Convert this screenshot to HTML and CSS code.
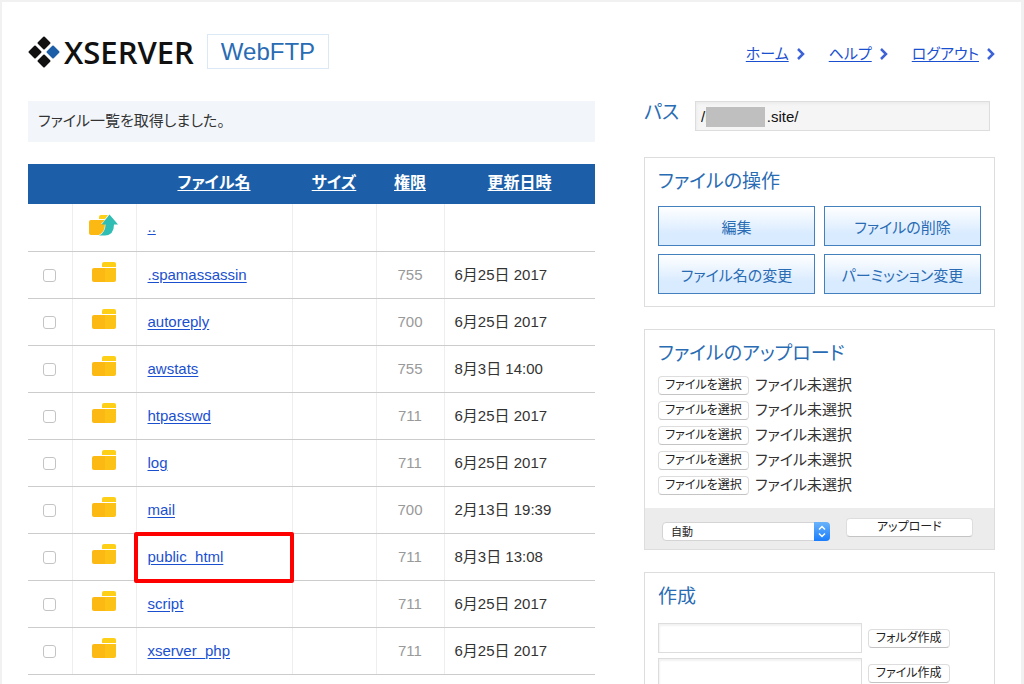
FILE: index.html
```html
<!DOCTYPE html>
<html lang="ja">
<head>
<meta charset="utf-8">
<meta name="viewport" content="width=device-width, initial-scale=1">
<title>XSERVER WebFTP</title>
<link rel="stylesheet" href="styles.css">
</head>
<body>
<svg class="defs" aria-hidden="true">
  <symbol id="folder" viewBox="0 0 24 20">
    <path fill="#fdd017" d="M10 5V2q0-2 2-2h10q2 0 2 2v3z"/>
    <path fill="#fdb913" d="M2 6h12v14H2q-2 0-2-2V8q0-2 2-2z"/>
    <path fill="#fdc216" d="M13 6h11v12q0 2-2 2h-9z"/>
  </symbol>
  <symbol id="folder-up" viewBox="0 0 30 22">
    <path fill="#fdd017" d="M10 5V3q0-2 2-2h7l-3 4z"/>
    <path fill="#fdb913" d="M2 6h14l-4 4h4q0 8-6 11H2q-2 0-2-2V8q0-2 2-2z"/>
    <path fill="#30bdb4" d="M20.500 0.500L29 10.500h-4q0 10.500-9 11h-6q6.500-3 6.500-11h-4z"/>
  </symbol>
  <symbol id="chevron" viewBox="0 0 8 12">
    <path fill="none" stroke="#3c62d6" stroke-width="2.500" d="M1 1l5 5-5 5"/>
  </symbol>
</svg>
<div class="sheet">
  <header class="header">
    <div class="brand">
      <svg class="mark" viewBox="0 0 32 32" aria-hidden="true">
        <g fill="#111" stroke="#111" stroke-width="2" stroke-linejoin="round">
          <path d="M16 1.500l5.500 5.500-5.500 5.500L10.500 7z"/>
          <path d="M7 10.500l5.500 5.500L7 21.500 1.500 16z"/>
          <path d="M16 19.500l5.500 5.500-5.500 5.500L10.500 25z"/>
          <path fill="#1c5fa8" stroke="#1c5fa8" d="M25 10.500l5.500 5.500-5.500 5.500-5.500-5.500z"/>
        </g>
      </svg>
      <span class="brand-name">XSERVER</span>
      <span class="product">WebFTP</span>
    </div>
    <nav class="nav">
      <span class="nav-item"><a href="#">ホーム</a><svg class="chevron"><use href="#chevron"/></svg></span>
      <span class="nav-item"><a href="#">ヘルプ</a><svg class="chevron"><use href="#chevron"/></svg></span>
      <span class="nav-item"><a href="#">ログアウト</a><svg class="chevron"><use href="#chevron"/></svg></span>
    </nav>
  </header>
  <div class="columns">
    <main class="main">
      <p class="message">ファイル一覧を取得しました。</p>
      <table class="files">
        <colgroup><col class="c-check"><col class="c-icon"><col class="c-name"><col class="c-size"><col class="c-mode"><col class="c-date"></colgroup>
        <thead><tr><th></th><th></th><th><a href="#">ファイル名</a></th><th><a href="#">サイズ</a></th><th><a href="#">権限</a></th><th><a href="#">更新日時</a></th></tr></thead>
        <tbody>
          <tr><td></td><td class="icon"><svg class="up"><use href="#folder-up"/></svg></td><td><a href="#">..</a></td><td></td><td></td><td></td></tr>
          <tr><td class="check"><input type="checkbox" aria-label=".spamassassin"></td><td class="icon"><svg class="folder"><use href="#folder"/></svg></td><td><a href="#">.spamassassin</a></td><td></td><td class="mode">755</td><td>6月25日 2017</td></tr>
          <tr><td class="check"><input type="checkbox" aria-label="autoreply"></td><td class="icon"><svg class="folder"><use href="#folder"/></svg></td><td><a href="#">autoreply</a></td><td></td><td class="mode">700</td><td>6月25日 2017</td></tr>
          <tr><td class="check"><input type="checkbox" aria-label="awstats"></td><td class="icon"><svg class="folder"><use href="#folder"/></svg></td><td><a href="#">awstats</a></td><td></td><td class="mode">755</td><td>8月3日 14:00</td></tr>
          <tr><td class="check"><input type="checkbox" aria-label="htpasswd"></td><td class="icon"><svg class="folder"><use href="#folder"/></svg></td><td><a href="#">htpasswd</a></td><td></td><td class="mode">711</td><td>6月25日 2017</td></tr>
          <tr><td class="check"><input type="checkbox" aria-label="log"></td><td class="icon"><svg class="folder"><use href="#folder"/></svg></td><td><a href="#">log</a></td><td></td><td class="mode">711</td><td>6月25日 2017</td></tr>
          <tr><td class="check"><input type="checkbox" aria-label="mail"></td><td class="icon"><svg class="folder"><use href="#folder"/></svg></td><td><a href="#">mail</a></td><td></td><td class="mode">700</td><td>2月13日 19:39</td></tr>
          <tr><td class="check"><input type="checkbox" aria-label="public_html"></td><td class="icon"><svg class="folder"><use href="#folder"/></svg></td><td class="marked"><a href="#">public_html</a></td><td></td><td class="mode">711</td><td>8月3日 13:08</td></tr>
          <tr><td class="check"><input type="checkbox" aria-label="script"></td><td class="icon"><svg class="folder"><use href="#folder"/></svg></td><td><a href="#">script</a></td><td></td><td class="mode">711</td><td>6月25日 2017</td></tr>
          <tr><td class="check"><input type="checkbox" aria-label="xserver_php"></td><td class="icon"><svg class="folder"><use href="#folder"/></svg></td><td><a href="#">xserver_php</a></td><td></td><td class="mode">711</td><td>6月25日 2017</td></tr>
        </tbody>
      </table>
    </main>
    <aside class="side">
      <div class="path">
        <label class="title" for="path">パス</label>
        <div class="path-field"><input id="path" class="text" type="text" value="/l              .site/" readonly><span class="redaction"></span></div>
      </div>
      <section class="panel">
        <h2 class="title">ファイルの操作</h2>
        <div class="actions">
          <button class="action" type="button">編集</button>
          <button class="action" type="button">ファイルの削除</button>
          <button class="action" type="button">ファイル名の変更</button>
          <button class="action" type="button">パーミッション変更</button>
        </div>
      </section>
      <section class="panel upload">
        <h2 class="title">ファイルのアップロード</h2>
        <div class="pickers">
          <div class="picker"><button class="button" type="button">ファイルを選択</button><span>ファイル未選択</span></div>
          <div class="picker"><button class="button" type="button">ファイルを選択</button><span>ファイル未選択</span></div>
          <div class="picker"><button class="button" type="button">ファイルを選択</button><span>ファイル未選択</span></div>
          <div class="picker"><button class="button" type="button">ファイルを選択</button><span>ファイル未選択</span></div>
          <div class="picker"><button class="button" type="button">ファイルを選択</button><span>ファイル未選択</span></div>
        </div>
        <div class="upload-bar">
          <div class="select-wrap">
            <select class="select" aria-label="文字コード"><option>自動</option></select>
            <svg class="stepper" viewBox="0 0 16 18" aria-hidden="true"><path fill="none" stroke="#fff" stroke-width="1.500" d="M5 7l3-3 3 3M5 11l3 3 3-3"/></svg>
          </div>
          <button class="button wide" type="button">アップロード</button>
        </div>
      </section>
      <section class="panel">
        <h2 class="title">作成</h2>
        <div class="create">
          <input class="text" type="text" aria-label="フォルダ名"><button class="button" type="button">フォルダ作成</button>
          <input class="text" type="text" aria-label="ファイル名"><button class="button" type="button">ファイル作成</button>
        </div>
      </section>
    </aside>
  </div>
</div>
</body>
</html>
```
FILE: styles.css
```css
* { box-sizing: border-box; }
body {
  margin: 0;
  padding: 2px 3px 0 2px;
  background: #f1f1f1;
  color: #333;
  font: 15px/20px "Liberation Sans", "Noto Sans CJK JP", sans-serif;
  font-feature-settings: "palt";
}
button, input, select { font: inherit; font-feature-settings: inherit; }
a { color: #1a50d0; text-underline-offset: 2px; }
.defs { position: absolute; width: 0; height: 0; }
.sheet { min-height: 100vh; padding: 32px 26px 12px; background: #fff; }

.header { display: flex; justify-content: space-between; height: 67px; }
.brand { display: flex; align-items: center; height: 35px; }
.mark { width: 32px; height: 32px; }
.brand-name { margin-left: 4px; color: #111; font: 600 31px/34px "Open Sans", sans-serif; }
.product {
  margin-left: 13px;
  padding: 0 13px;
  border: 1px solid #dbe8f5;
  color: #2a6cb4;
  font-size: 24px;
  line-height: 33px;
}
.nav { display: flex; gap: 24px; padding-top: 10px; }
.nav-item { display: flex; align-items: center; gap: 8px; height: 20px; }
.chevron { width: 8px; height: 12px; }

.columns { display: grid; grid-template-columns: minmax(0, 567fr) minmax(0, 351fr); gap: 49px; align-items: start; }
.message { margin: 0 0 22px; padding: 10px 10px 11px; background: #f2f6fa; }

.files { width: 100%; table-layout: fixed; border-collapse: collapse; }
.c-check { width: 44px; }
.c-icon { width: 64px; }
.c-name { width: 156px; }
.c-size { width: 84px; }
.c-mode { width: 68px; }
.files th { height: 40px; padding: 0 0 2px; background: #1c5fa8; font-size: 16px; }
.files th a { color: #fff; }
.files td { position: relative; height: 47px; padding: 0 10px; border-bottom: 1px solid #ccc; border-left: 1px solid #eee; }
.files td:first-child { border-left: 0; }
.files td:nth-child(3) { padding-left: 11px; }
.files .check { padding: 2px 0 0; text-align: center; }
.check input {
  appearance: none;
  display: block;
  width: 13px;
  height: 13px;
  margin: 0 auto;
  border: 1px solid #c4c4c4;
  border-radius: 3px;
  background: #fff;
}
.files .icon { padding: 0 0 5px; text-align: center; }
.icon svg { display: block; margin: 0 auto; }
.folder { width: 24px; height: 20px; }
.up { width: 30px; height: 22px; }
.files .mode { color: #999; text-align: center; }
.marked::after { content: ""; position: absolute; inset: -2px -2px -3px -3px; border: 4px solid #f00; border-radius: 2px; }

.side { display: grid; gap: 22px; }
.title { margin: 0; color: #2a6cb4; font-size: 19px; font-weight: 400; line-height: 24px; }
.path { display: flex; gap: 16px; height: 34px; }
.path-field { position: relative; flex: 1; margin-right: 5px; }
.text {
  width: 100%;
  height: 30px;
  padding: 0 5px;
  border: 1px solid #ddd;
  background: #fff;
  box-shadow: inset 1px 2px 2px #f2f2f2;
  color: #111;
}
.path .text { background: #f5f5f5; white-space: pre; box-shadow: inset 1px 2px 2px #ececec; }
.redaction { position: absolute; left: 11px; top: 6px; width: 59px; height: 20px; background: #bfbfbf; }
.panel { padding: 12px 13px; border: 1px solid #ddd; }
.actions { display: grid; grid-template-columns: 1fr 1fr; gap: 8px 9px; margin-top: 12px; }
.action {
  height: 40px;
  padding: 3px 0 0;
  border: 1px solid #4380bd;
  background: linear-gradient(#fff, #d9ebff 70%);
  color: #2a6cb4;
}
.pickers { display: grid; gap: 5px; margin: 9px 0 13px; }
.picker { display: flex; align-items: center; gap: 6px; height: 20px; }
.button {
  height: 19px;
  padding: 0 7px;
  border: 1px solid #ddd;
  border-bottom-color: #c4c4c4;
  border-radius: 4px;
  background: #fff;
  color: #222;
  font-size: 12px;
  line-height: 17px;
  white-space: nowrap;
}
.picker .button { width: 91px; padding: 0; }
.upload { padding-bottom: 0; }
.upload-bar { display: flex; align-items: flex-start; gap: 16px; margin: 0 -13px; padding: 10px 21px 8px 17px; background: #ececec; }
.select-wrap { position: relative; flex: 170; padding-top: 4px; }
.select {
  appearance: none;
  display: block;
  width: 100%;
  height: 19px;
  padding: 0 8px;
  border: 1px solid #d4d4d4;
  border-radius: 4px;
  background: #fff;
  color: #222;
  font-size: 11px;
  line-height: 16px;
}
.stepper { position: absolute; right: 0; top: 4px; width: 16px; height: 19px; border-radius: 0 4px 4px 0; background: linear-gradient(#6ab3fa, #1a7dfb); }
.wide { flex: 127; padding: 0; }
.create { display: grid; grid-template-columns: 204px max-content; gap: 5px 6px; align-items: center; margin-top: 14px; }
```
